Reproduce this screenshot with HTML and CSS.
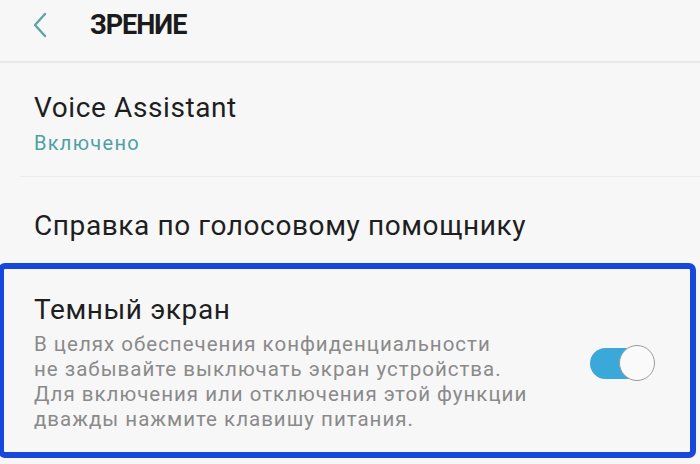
FILE: index.html
```html
<!DOCTYPE html>
<html lang="ru">
<head>
<meta charset="utf-8">
<link rel="stylesheet" href="styles.css">
</head>
<body>
<div class="screen">
  <header class="header">
    <svg class="back" width="16" height="26" viewBox="0 0 16 26"><polyline points="13,2 3,13 13,24" fill="none" stroke="#5fa3a6" stroke-width="2.4" stroke-linecap="round" stroke-linejoin="round"/></svg>
    <h1 class="title">ЗРЕНИЕ</h1>
  </header>
  <div class="item item-va">
    <div class="item-title">Voice Assistant</div>
    <div class="item-status">Включено</div>
  </div>
  <div class="item item-help">
    <div class="item-title">Справка по голосовому помощнику</div>
  </div>
  <div class="highlight">
    <div class="hl-text">
      <div class="item-title">Темный экран</div>
      <div class="desc">В целях обеспечения конфиденциальности<br>не забывайте выключать экран устройства.<br>Для включения или отключения этой функции<br>дважды нажмите клавишу питания.</div>
    </div>
    <div class="toggle"><div class="knob"></div></div>
  </div>
</div>
</body>
</html>
```
FILE: styles.css
```css
html, body {
  margin: 0;
  padding: 0;
  background: #f7f7f7;
}
.screen {
  width: 700px;
  height: 464px;
  overflow: hidden;
  font-family: Roboto, "Noto Sans", sans-serif;
  color: #1e1e1e;
}
.header {
  height: 61px;
  display: flex;
  align-items: center;
  padding-left: 32px;
  border-bottom: 2px solid #e8e8e8;
  box-sizing: content-box;
}
.back {
  display: block;
  margin-top: -12px;
}
.title {
  margin: -12px 0 0 42px;
  font-size: 27px;
  font-weight: 700;
  letter-spacing: -1px;
  color: #1b1b1b;
}
.item {
  padding-left: 34px;
}
.item-va {
  height: 114px;
  box-sizing: border-box;
  padding-top: 29px;
  border-bottom: 1.5px solid #ececec;
  margin-left: 20px;
  padding-left: 14px;
}
.item-title {
  font-size: 28px;
  line-height: 32px;
  letter-spacing: 0.6px;
  color: #1e1e1e;
}
.item-status {
  margin-top: 7px;
  font-size: 20px;
  line-height: 24px;
  color: #4e9fa6;
  letter-spacing: 1.3px;
}
.item-help {
  height: 86px;
  box-sizing: border-box;
  padding-top: 33px;
}
.highlight {
  margin-left: -2px;
  margin-right: 4px;
  height: 195px;
  box-sizing: border-box;
  border: 6px solid #1648dc;
  border-radius: 7px;
  display: flex;
  align-items: flex-start;
  padding: 25px 47px 0 30px;
  background: #f7f7f7;
}
.hl-text {
  flex: 1;
}
.desc {
  margin-top: 6px;
  font-size: 20.5px;
  line-height: 25px;
  letter-spacing: 1px;
  color: #8a8a8a;
}
.toggle {
  position: relative;
  margin-top: 54px;
  width: 53px;
  height: 31px;
  border-radius: 16px;
  background: #3aa9d9;
}
.knob {
  position: absolute;
  right: -12px;
  top: -3px;
  width: 36px;
  height: 36px;
  border-radius: 50%;
  background: #fafafa;
  border: 1.5px solid #9a9a9a;
  box-sizing: border-box;
}
```
